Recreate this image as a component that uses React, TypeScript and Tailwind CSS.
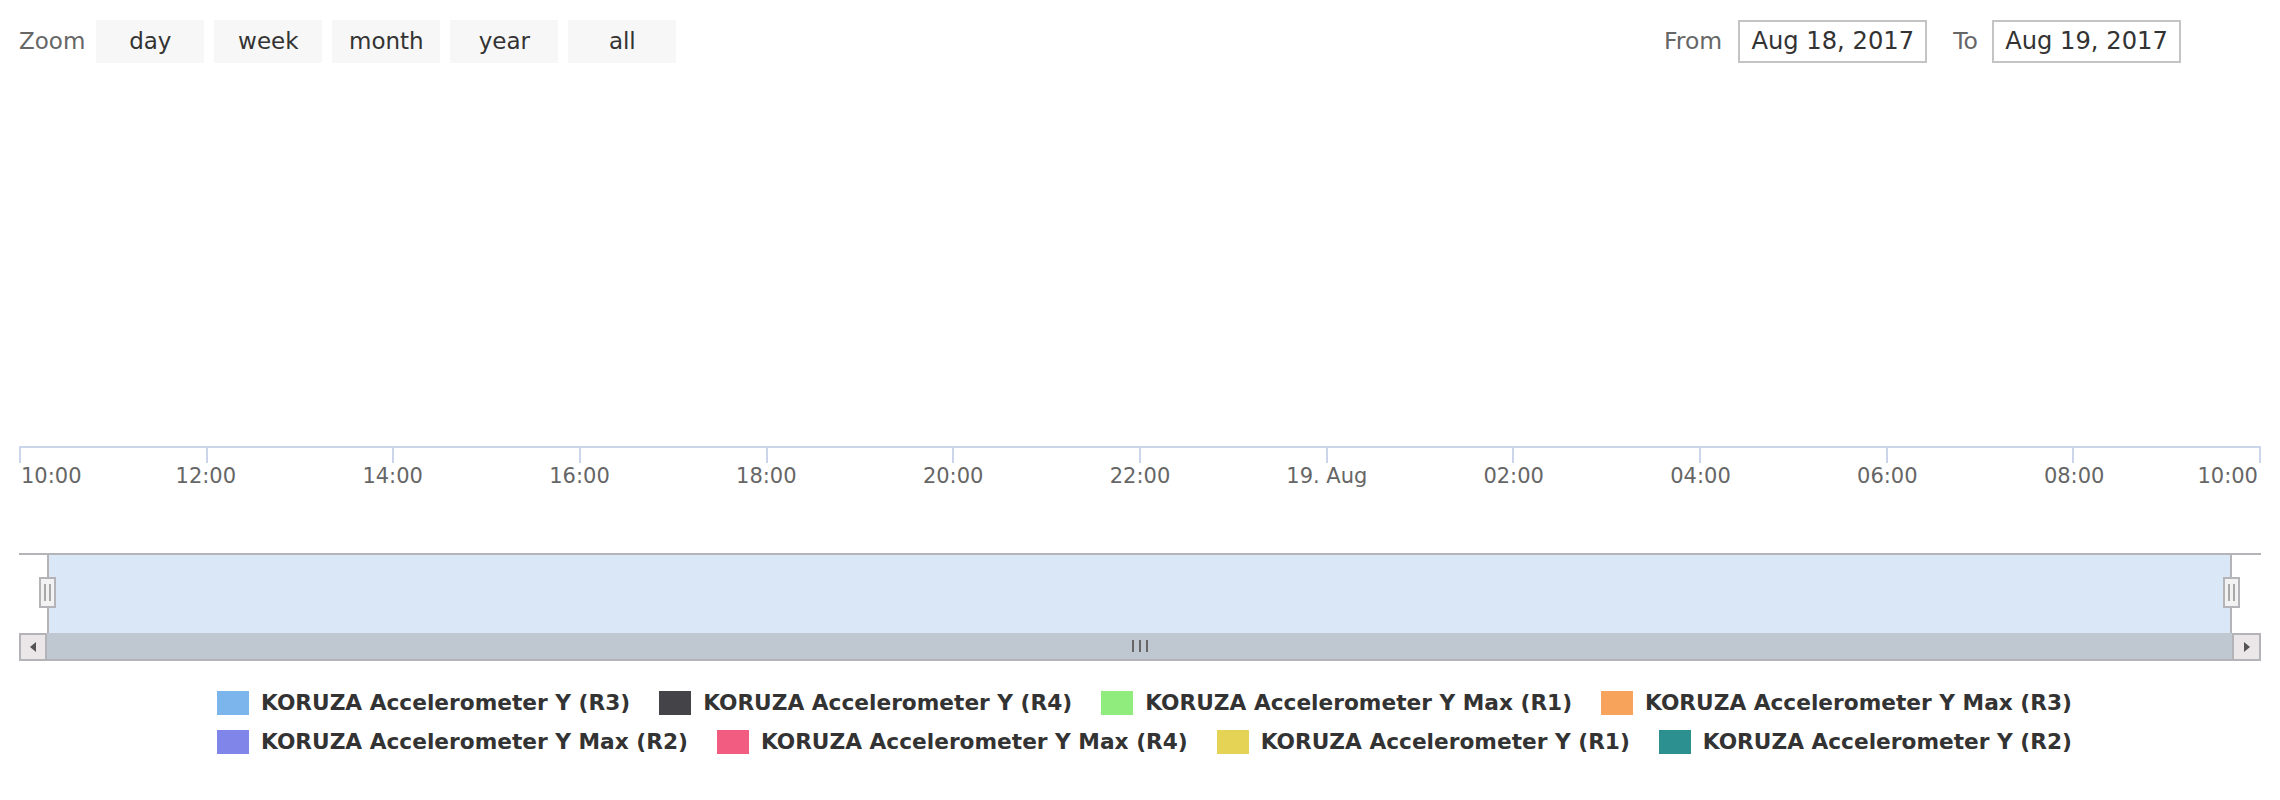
import React from "react";

const ranges = ["day", "week", "month", "year", "all"];
const ticks = ["10:00", "12:00", "14:00", "16:00", "18:00", "20:00", "22:00", "19. Aug", "02:00", "04:00", "06:00", "08:00"];

const legendRows = [
  [
    { label: "KORUZA Accelerometer Y (R3)", color: "bg-[#7cb5ec]" },
    { label: "KORUZA Accelerometer Y (R4)", color: "bg-[#434348]" },
    { label: "KORUZA Accelerometer Y Max (R1)", color: "bg-[#90ed7d]" },
    { label: "KORUZA Accelerometer Y Max (R3)", color: "bg-[#f7a35c]" },
  ],
  [
    { label: "KORUZA Accelerometer Y Max (R2)", color: "bg-[#8085e9]" },
    { label: "KORUZA Accelerometer Y Max (R4)", color: "bg-[#f15c80]" },
    { label: "KORUZA Accelerometer Y (R1)", color: "bg-[#e4d354]" },
    { label: "KORUZA Accelerometer Y (R2)", color: "bg-[#2b908f]" },
  ],
];

const Handle = ({ side }: { side: "left" | "right" }) => (
  <div
    className={`absolute top-[22px] w-[17px] h-[31px] bg-[#f2f2f2] border-2 border-[#b3b3b8] flex justify-center gap-[3px] pt-[5px] ${
      side === "left" ? "-left-[10px]" : "-right-[10px]"
    }`}
  >
    <div className="w-[2px] h-[17px] bg-[#a8a8a8]" />
    <div className="w-[2px] h-[17px] bg-[#a8a8a8]" />
  </div>
);

export default function App() {
  return (
    <div className="w-[2280px] h-[800px] bg-white px-[19px] pt-[20px] font-['DejaVu_Sans',sans-serif]">
      {/* range selector + date inputs */}
      <div className="flex items-center justify-between h-[43px]">
        <div className="flex items-center">
          <span className="text-[23px] text-[#666666] mr-[11px]">Zoom</span>
          <div className="flex gap-[10px]">
            {ranges.map((r) => (
              <div
                key={r}
                className="w-[108px] h-[43px] bg-[#f7f7f7] flex items-center justify-center text-[23px] text-[#333333]"
              >
                {r}
              </div>
            ))}
          </div>
        </div>
        <div className="flex items-center mr-[80px] text-[23.5px] text-[#666666]">
          <span className="mr-[16px]">From</span>
          <div className="w-[189px] h-[43px] border-2 border-[#c4c4c4] flex items-center justify-center text-[24.2px] text-[#333333]">
            Aug 18, 2017
          </div>
          <span className="ml-[26px] mr-[14px]">To</span>
          <div className="w-[189px] h-[43px] border-2 border-[#c4c4c4] flex items-center justify-center text-[24.2px] text-[#333333]">
            Aug 19, 2017
          </div>
        </div>
      </div>

      {/* empty plot area */}
      <div className="h-[383px]" />

      {/* x axis */}
      <div className="flex">
        {ticks.map((t, i) => (
          <div
            key={t}
            className={`flex-1 h-[17px] border-t-2 border-l-2 border-[#ccd6eb] ${i === ticks.length - 1 ? "border-r-2" : ""}`}
          />
        ))}
      </div>
      <div className="grid grid-cols-12 h-[24px] leading-[24px] text-[21px] text-[#666666] mt-[1px]">
        {ticks.map((t, i) => (
          <div key={t} className={`flex ${i === ticks.length - 1 ? "justify-between" : ""}`}>
            <span className={i === 0 ? "ml-[2px]" : "inline-block -translate-x-1/2"}>{t}</span>
            {i === ticks.length - 1 && <span className="mr-[3px]">10:00</span>}
          </div>
        ))}
      </div>

      {/* navigator */}
      <div className="mt-[65px] flex h-[80px] border-t-2 border-[#b3b3b8]">
        <div className="w-[28px]" />
        <div className="relative flex-1 bg-[#d9e7f7] border-x-2 border-[#b3b3b8]">
          <Handle side="left" />
          <Handle side="right" />
        </div>
        <div className="w-[29px]" />
      </div>

      {/* scrollbar */}
      <div className="flex h-[28px]">
        <div className="w-[28px] bg-[#ebe7e8] border-2 border-[#b3b3b8] flex items-center justify-center">
          <div className="w-0 h-0 border-y-[5px] border-y-transparent border-r-[6px] border-r-[#555555]" />
        </div>
        <div className="flex-1 bg-[#bfc8d1] border-b-2 border-[#b3b3b8] flex items-center justify-center gap-[5px]">
          <div className="w-[2px] h-[12px] bg-[#666666]" />
          <div className="w-[2px] h-[12px] bg-[#666666]" />
          <div className="w-[2px] h-[12px] bg-[#666666]" />
        </div>
        <div className="w-[29px] bg-[#ebe7e8] border-2 border-[#b3b3b8] flex items-center justify-center">
          <div className="w-0 h-0 border-y-[5px] border-y-transparent border-l-[6px] border-l-[#555555]" />
        </div>
      </div>

      {/* legend */}
      <div className="mt-[30px] pl-[9px] flex flex-col gap-[15px]">
        {legendRows.map((row, ri) => (
          <div key={ri} className="flex justify-center gap-[29px]">
            {row.map((item) => (
              <div key={item.label} className="flex items-center h-[24px]">
                <div className={`w-[32px] h-[24px] ${item.color}`} />
                <span className="ml-[12px] text-[21.7px] font-bold text-[#333333] leading-[24px]">{item.label}</span>
              </div>
            ))}
          </div>
        ))}
      </div>
    </div>
  );
}
